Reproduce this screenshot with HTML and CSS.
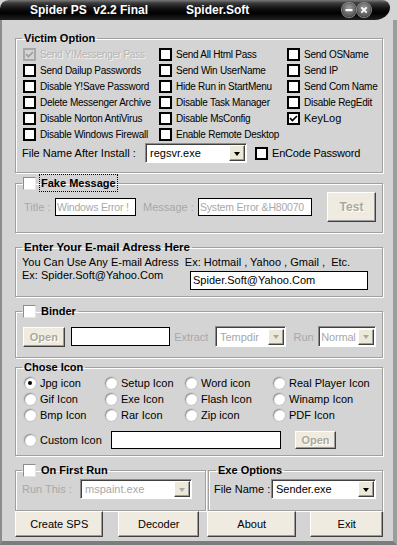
FILE: index.html
```html
<!DOCTYPE html>
<html lang="en">
<head>
  <meta charset="UTF-8" />
  <title>Spider PS v2.2 Final</title>
  <link rel="stylesheet" href="styles.css">
</head>
<body>
  <div class="window">
    <div class="titlebar">
      <span class="title-main">Spider PS&nbsp; v2.2 Final</span>
      <span class="title-sub">Spider.Soft</span>
      <span class="title-buttons">
        <span class="tbtn">
          <svg width="14" height="14" viewBox="0 0 14 14"><rect x="3.5" y="6" width="7" height="2.2" fill="#fff"/></svg>
        </span>
        <span class="tbtn">
          <svg width="14" height="14" viewBox="0 0 14 14"><path d="M4.3 4.3 L9.7 9.7 M9.7 4.3 L4.3 9.7" stroke="#fff" stroke-width="1.8"/></svg>
        </span>
      </span>
    </div>

    <div class="client">
      <fieldset class="group victim">
        <legend>Victim Option</legend>
        <div class="check-grid">
          <div class="item disabled"><span class="cb checked"><svg width="9" height="9" viewBox="0 0 9 9"><path d="M1 4.2 L3.4 6.6 L8 2" /></svg></span>Send Y!Messenger Pass</div>
          <div class="item"><span class="cb"></span>Send All Html Pass</div>
          <div class="item"><span class="cb"></span>Send OSName</div>
          <div class="item"><span class="cb"></span>Send Dailup Passwords</div>
          <div class="item"><span class="cb"></span>Send Win UserName</div>
          <div class="item"><span class="cb"></span>Send IP</div>
          <div class="item"><span class="cb"></span>Disable Y!Save Password</div>
          <div class="item"><span class="cb"></span>Hide Run in StartMenu</div>
          <div class="item"><span class="cb"></span>Send Com Name</div>
          <div class="item"><span class="cb"></span>Delete Messenger Archive</div>
          <div class="item"><span class="cb"></span>Disable Task Manager</div>
          <div class="item"><span class="cb"></span>Disable RegEdit</div>
          <div class="item"><span class="cb"></span>Disable Norton AntiVirus</div>
          <div class="item"><span class="cb"></span>Disable MsConfig</div>
          <div class="item keylog"><span class="cb checked"><svg width="9" height="9" viewBox="0 0 9 9"><path d="M1 4.2 L3.4 6.6 L8 2" /></svg></span>KeyLog</div>
          <div class="item"><span class="cb"></span>Disable Windows Firewall</div>
          <div class="item"><span class="cb"></span>Enable Remote Desktop</div>
        </div>
        <div class="install-row">
          <span class="install-label">File Name After Install :</span>
          <div class="combo install-combo"><span class="combo-text">regsvr.exe</span><span class="combo-btn"><span class="arrow"></span></span></div>
          <div class="item encode"><span class="cb"></span>EnCode Password</div>
        </div>
      </fieldset>

      <fieldset class="group fake">
        <legend class="check-legend"><span class="cb flat"></span><span class="focus">Fake Message</span></legend>
        <div class="fake-row">
          <span class="dim title-label">Title :</span>
          <span class="tb small-tb title-box dim-text">Windows Error !</span>
          <span class="dim msg-label">Message :</span>
          <span class="tb small-tb msg-box dim-text">System Error &amp;H80070</span>
          <span class="btn btn-off test-btn">Test</span>
        </div>
      </fieldset>

      <fieldset class="group email">
        <legend>Enter Your E-mail Adress Here</legend>
        <div class="email-line">You Can Use Any E-mail Adress  Ex: Hotmail , Yahoo , Gmail ,  Etc.</div>
        <div class="email-row">
          <span class="email-ex">Ex: Spider.Soft@Yahoo.Com</span>
          <span class="tb email-box">Spider.Soft@Yahoo.Com</span>
        </div>
      </fieldset>

      <fieldset class="group binder">
        <legend class="check-legend"><span class="cb flat"></span><span>Binder</span></legend>
        <div class="binder-row">
          <span class="btn btn-off open-btn">Open</span>
          <span class="tb binder-box"></span>
          <span class="dim extract-label">Extract</span>
          <div class="combo combo-off extract-combo"><span class="combo-text">Tempdir</span><span class="combo-btn"><span class="arrow"></span></span></div>
          <span class="dim run-label">Run</span>
          <div class="combo combo-off run-combo"><span class="combo-text">Normal</span><span class="combo-btn"><span class="arrow"></span></span></div>
        </div>
      </fieldset>

      <fieldset class="group icons">
        <legend>Chose Icon</legend>
        <div class="radio-grid">
          <div class="item"><span class="rb on"></span>Jpg icon</div>
          <div class="item"><span class="rb"></span>Setup Icon</div>
          <div class="item"><span class="rb"></span>Word icon</div>
          <div class="item"><span class="rb"></span>Real Player Icon</div>
          <div class="item"><span class="rb"></span>Gif Icon</div>
          <div class="item"><span class="rb"></span>Exe Icon</div>
          <div class="item"><span class="rb"></span>Flash Icon</div>
          <div class="item"><span class="rb"></span>Winamp Icon</div>
          <div class="item"><span class="rb"></span>Bmp Icon</div>
          <div class="item"><span class="rb"></span>Rar Icon</div>
          <div class="item"><span class="rb"></span>Zip icon</div>
          <div class="item"><span class="rb"></span>PDF Icon</div>
        </div>
        <div class="custom-row">
          <div class="item custom-item"><span class="rb"></span>Custom Icon</div>
          <span class="tb custom-box"></span>
          <span class="btn btn-off custom-open">Open</span>
        </div>
      </fieldset>

      <div class="bottom-row">
        <fieldset class="group first-run">
          <legend class="check-legend"><span class="cb flat"></span><span>On First Run</span></legend>
          <div class="opt-row">
            <span class="dim runthis-label">Run This :</span>
            <div class="combo combo-off runthis-combo"><span class="combo-text">mspaint.exe</span><span class="combo-btn"><span class="arrow"></span></span></div>
          </div>
        </fieldset>
        <fieldset class="group exe">
          <legend>Exe Options</legend>
          <div class="opt-row">
            <span class="filename-label">File Name :</span>
            <div class="combo exe-combo"><span class="combo-text">Sender.exe</span><span class="combo-btn"><span class="arrow"></span></span></div>
          </div>
        </fieldset>
      </div>

      <div class="button-row">
        <span class="btn create-btn">Create SPS</span>
        <span class="btn decoder-btn">Decoder</span>
        <span class="btn about-btn">About</span>
        <span class="btn exit-btn">Exit</span>
      </div>
    </div>
  </div>
</body>
</html>
```

FILE: styles.css
```css
* {
  box-sizing: border-box;
}

body {
  margin: 0;
  font-family: "Liberation Sans", Arial, sans-serif;
  font-size: 11px;
  color: #000;
  background: #d4d4d4;
}

.window {
  width: 397px;
  height: 545px;
  display: flex;
  flex-direction: column;
  background: #d4d4d4;
  overflow: hidden;
}

/* title bar */
.titlebar {
  height: 20px;
  margin-right: 7px;
  flex: none;
  display: flex;
  align-items: center;
  padding-left: 30px;
  color: #fff;
  font-weight: bold;
  font-size: 12px;
  background: linear-gradient(#7a7a7a 0, #3c3c3c 3px, #141414 8px, #000 13px, #202020 20px);
  border-radius: 9px 8px 16px 0 / 9px 8px 13px 0;
}

.title-main {
  width: 156px;
  white-space: pre;
}

.title-buttons {
  margin-left: auto;
  margin-right: 19px;
  display: flex;
  gap: 1px;
}

.tbtn {
  width: 14px;
  height: 14px;
  border-radius: 50%;
  background: radial-gradient(circle at 50% 35%, #9a9a9a, #5a5a5a 70%, #3a3a3a);
  box-shadow: 0 0 0 1px #8a8a8a;
  display: flex;
}

/* client area */
.client {
  flex: 1;
  border-left: 2px solid #8c8c8c;
  border-right: 4px solid #9c9c9c;
  border-bottom: 4px solid #7c7c7c;
  padding: 11px 10px 0 13px;
}

.group {
  margin: 0;
  padding: 0 6px 0 6px;
  border: 1px solid #a0a0a0;
  box-shadow: inset 1px 1px 0 #fff, 1px 1px 0 #fff;
  min-width: 0;
}

.group legend {
  padding: 0 2px;
  font-weight: bold;
  font-size: 11px;
  line-height: 14px;
  white-space: nowrap;
}

.email legend {
  font-size: 11.5px;
}

.check-legend {
  display: flex;
  align-items: center;
}

.check-legend .cb {
  margin-left: -1px;
  margin-right: 5px;
}

.focus {
  outline: 1px dotted #000;
  outline-offset: 1px;
}

.victim { height: 142px; }
.fake { height: 57px; margin-top: 3px; }
.email { height: 57px; margin-top: 7px; }
.binder { height: 54px; margin-top: 7px; }
.icons { height: 96px; margin-top: 2px; }

/* checkbox / radio */
.item {
  display: flex;
  align-items: center;
  height: 16px;
  white-space: nowrap;
}

.cb {
  width: 13px;
  height: 13px;
  flex: none;
  border: 2px solid #000;
  background: #fff;
  margin-right: 4px;
  display: flex;
  align-items: center;
  justify-content: center;
}

.cb svg path {
  fill: none;
  stroke: #000;
  stroke-width: 1.7;
}

.cb.flat {
  border: 1px solid;
  border-color: #8c8c8c #e4e4e4 #e4e4e4 #8c8c8c;
}

.item.disabled {
  color: #b4b4b4;
  text-shadow: 1px 1px 0 #f4f4f4;
}

.item.disabled .cb {
  border-color: #a8a8a8;
  background: #d4d4d4;
}

.item.disabled .cb svg path {
  stroke: #9c9c9c;
}

.rb {
  width: 12px;
  height: 12px;
  flex: none;
  border-radius: 50%;
  background: #fff;
  box-shadow: inset 1px 1px 1px #8c8c8c, 0 0 0 1px #c8c8c8;
  margin-right: 4px;
  display: flex;
  align-items: center;
  justify-content: center;
}

.rb.on::after {
  content: "";
  width: 4px;
  height: 4px;
  border-radius: 50%;
  background: #000;
}

/* victim grid */
.check-grid {
  display: grid;
  grid-template-columns: 136px 128px 1fr;
  margin: 1px 0 0 1px;
  font-size: 10px;
  letter-spacing: -0.25px;
}

.check-grid .keylog {
  font-size: 11px;
  letter-spacing: 0;
}

.install-row {
  display: flex;
  align-items: center;
  height: 20px;
  margin-top: 1px;
}

.install-label {
  width: 123px;
}

.install-combo {
  width: 102px;
  margin-right: 8px;
}

.encode {
  letter-spacing: -0.2px;
}

/* text boxes */
.tb {
  display: block;
  height: 18px;
  background: #fff;
  border: 1px solid #000;
  padding: 0 2px;
  line-height: 16px;
  white-space: nowrap;
  overflow: hidden;
}

.small-tb {
  font-size: 10.5px;
  letter-spacing: -0.2px;
  padding: 0 1px;
}

.dim {
  color: #a8a8a8;
}

.dim-text {
  color: #a8a8a8;
}

/* combo boxes */
.combo {
  display: flex;
  align-items: center;
  height: 20px;
  background: #fff;
  border: 1px solid;
  border-color: #8c8c8c #fff #fff #8c8c8c;
  box-shadow: inset 1px 1px 0 #404040;
  padding: 1px 1px 1px 2px;
}

.combo-text {
  flex: 1;
  padding-left: 2px;
  white-space: nowrap;
  overflow: hidden;
}

.combo-btn {
  width: 16px;
  height: 16px;
  flex: none;
  background: #ece9d8;
  border: 1px solid;
  border-color: #fff #404040 #404040 #fff;
  box-shadow: inset -1px -1px 0 #9c9c9c;
  display: flex;
  align-items: center;
  justify-content: center;
}

.arrow {
  width: 0;
  height: 0;
  border-left: 3.5px solid transparent;
  border-right: 3.5px solid transparent;
  border-top: 4px solid #000;
  margin-top: 1px;
}

.combo-off {
  background: #fff;
  color: #a8a8a8;
}

.combo-off .arrow {
  border-top-color: #a8a8a8;
}

/* buttons */
.btn {
  display: flex;
  align-items: center;
  justify-content: center;
  background: #efebe0;
  border: 1px solid;
  border-color: #fff #404040 #404040 #fff;
  box-shadow: inset -1px -1px 0 #9c9c9c;
  font-size: 11px;
  white-space: nowrap;
}

.btn-off {
  color: #aca899;
  font-weight: bold;
  text-shadow: 1px 1px 0 #fff;
}

/* fake message */
.fake-row {
  display: flex;
  align-items: center;
  height: 30px;
  margin-top: 2px;
}

.title-label {
  width: 31px;
  margin-left: 2px;
}

.title-box {
  width: 81px;
}

.msg-label {
  width: 55px;
  margin-left: 7px;
}

.msg-box {
  width: 114px;
}

.test-btn {
  width: 49px;
  height: 30px;
  margin-left: 15px;
  font-size: 12px;
}

/* email */
.email-line {
  margin-top: 2px;
  line-height: 13px;
  white-space: pre;
}

.email-row {
  display: flex;
  align-items: flex-start;
}

.email-ex {
  width: 168px;
  line-height: 13px;
}

.email-box {
  width: 178px;
  height: 19px;
  margin-top: 2px;
  line-height: 17px;
}

/* binder */
.binder-row {
  display: flex;
  align-items: center;
  height: 21px;
  margin-top: 8px;
}

.open-btn {
  width: 42px;
  height: 20px;
  margin-left: 1px;
}

.binder-box {
  width: 100px;
  height: 19px;
  margin-left: 6px;
}

.extract-label {
  width: 41px;
  margin-left: 4px;
}

.extract-combo {
  width: 72px;
  height: 21px;
}

.run-label {
  width: 25px;
  margin-left: 7px;
}

.run-combo {
  width: 58px;
  height: 21px;
}

.run-combo .combo-text {
  padding-left: 0;
  letter-spacing: -0.2px;
}

/* chose icon */
.radio-grid {
  display: grid;
  grid-template-columns: 81px 80px 88px 1fr;
  margin: 1px 0 0 2px;
}

.custom-row {
  display: flex;
  align-items: center;
  height: 18px;
  margin: 8px 0 0 2px;
}

.custom-item {
  width: 87px;
}

.custom-box {
  width: 170px;
}

.custom-open {
  width: 41px;
  height: 18px;
  margin-left: 14px;
}

/* bottom groups */
.bottom-row {
  display: flex;
  gap: 2px;
  margin-top: 7px;
}

.first-run {
  width: 191px;
  height: 48px;
}

.exe {
  flex: 1;
  height: 48px;
  padding-left: 5px;
}

.exe legend {
  margin-left: 2px;
}

.opt-row {
  display: flex;
  align-items: center;
  height: 20px;
  margin-top: 2px;
}

.runthis-label {
  width: 58px;
}

.runthis-combo {
  width: 112px;
}

.filename-label {
  width: 57px;
}

.exe-combo {
  width: 105px;
}

/* command buttons */
.button-row {
  display: flex;
  height: 26px;
}

.button-row .btn {
  height: 26px;
  font-size: 11px;
}

.create-btn { width: 89px; }
.decoder-btn { width: 81px; margin-left: 15px; }
.about-btn { width: 90px; margin-left: 8px; }
.exit-btn { width: 73px; margin-left: 14px; }
```
